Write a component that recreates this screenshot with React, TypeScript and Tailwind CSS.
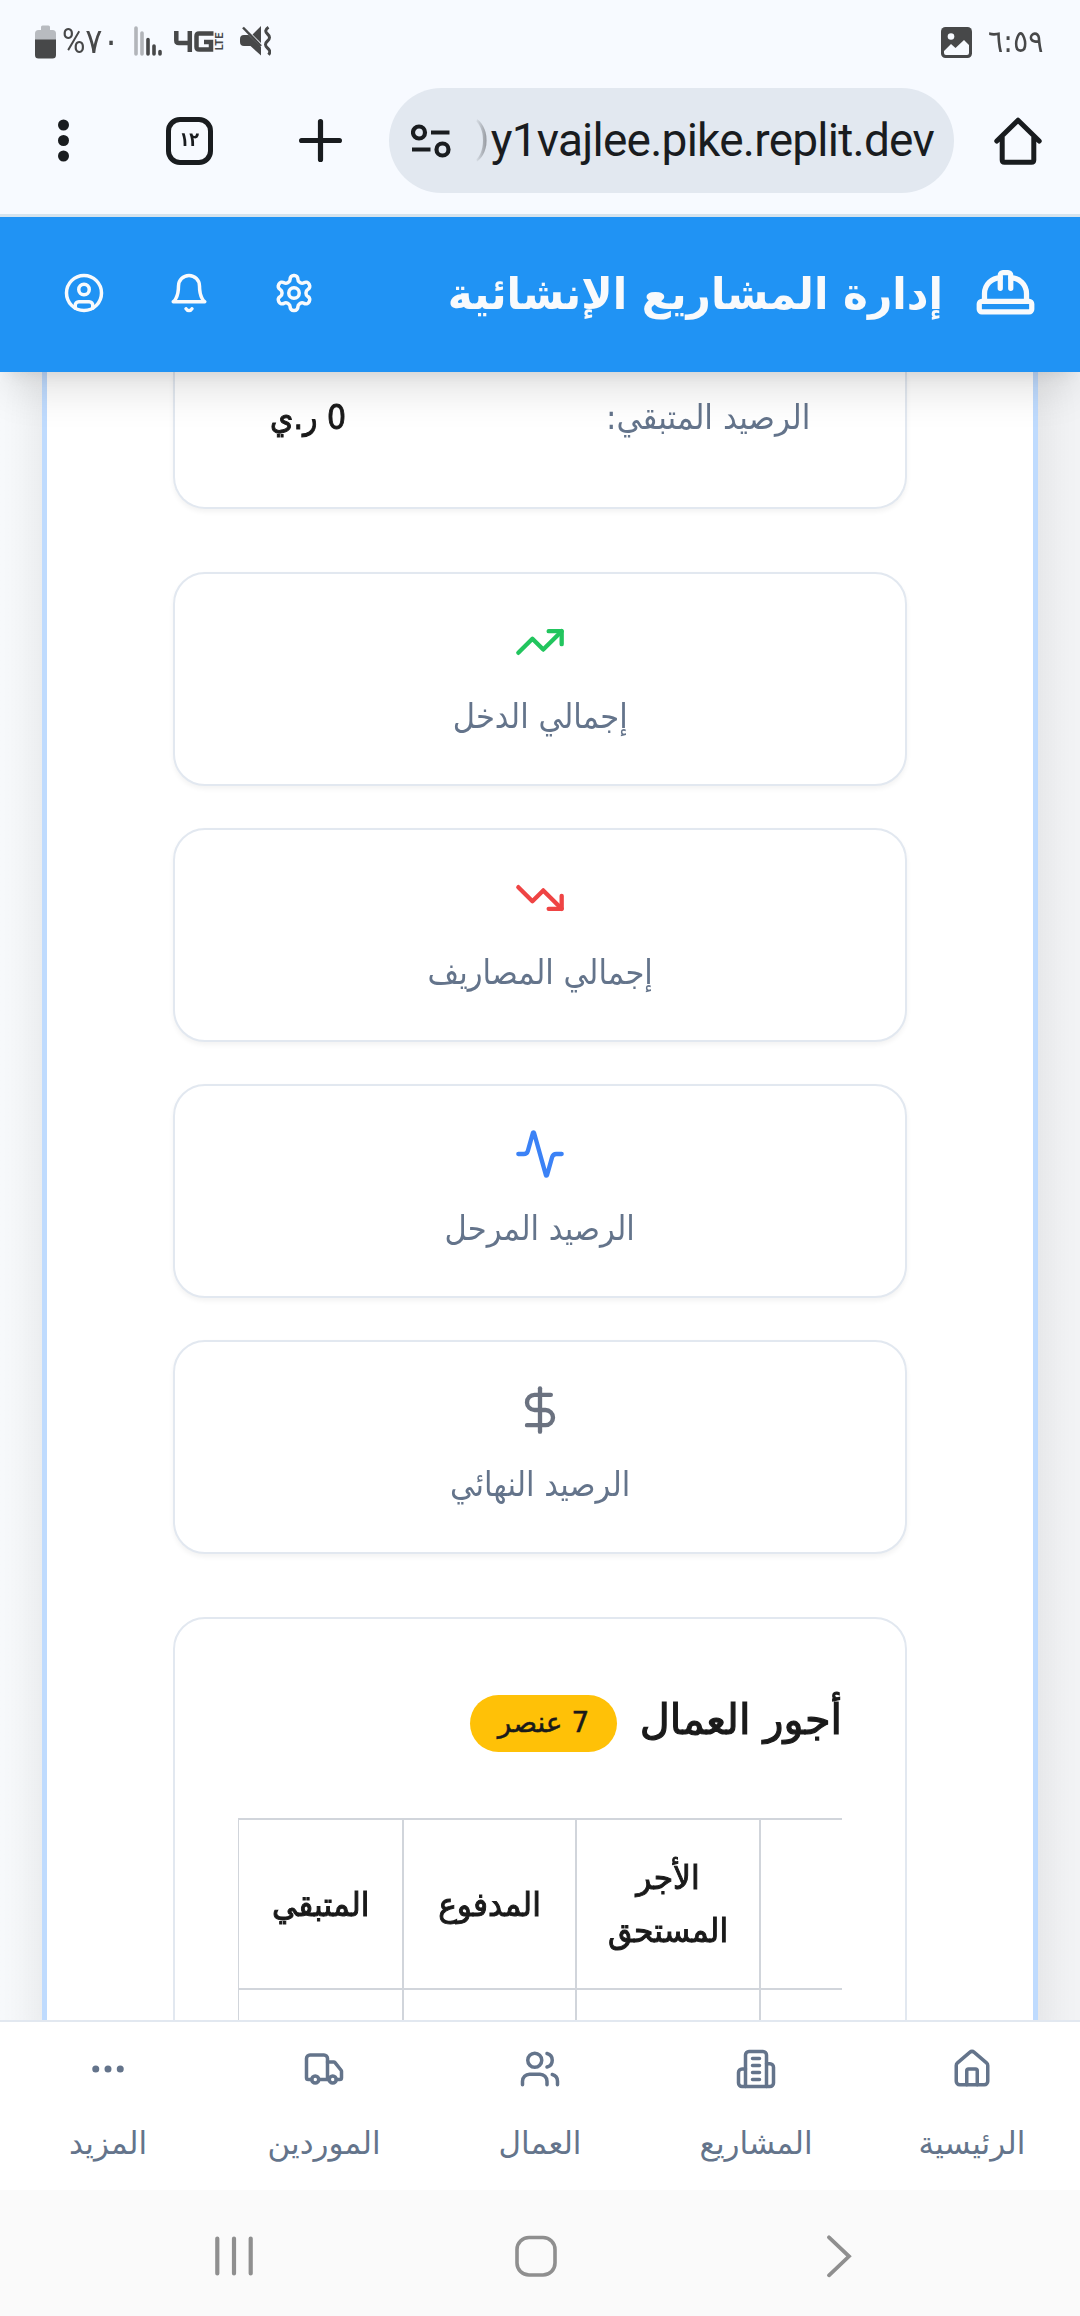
import React from 'react';
import { Activity, CircleUser, DollarSign, Ellipsis, HardHat, House, TrendingDown, TrendingUp, Truck, Users } from 'lucide-react';

type IconProps = { className?: string };

const lineIcon = {
  viewBox: '0 0 24 24',
  fill: 'none',
  stroke: 'currentColor',
  strokeWidth: 2,
  strokeLinecap: 'round' as const,
  strokeLinejoin: 'round' as const,
};

function GearIcon({ className }: IconProps) {
  return (
    <svg {...lineIcon} className={className}>
      <path d="M12.22 2h-.44a2 2 0 0 0-2 2v.18a2 2 0 0 1-1 1.73l-.43.25a2 2 0 0 1-2 0l-.15-.08a2 2 0 0 0-2.73.73l-.22.38a2 2 0 0 0 .73 2.73l.15.1a2 2 0 0 1 1 1.72v.51a2 2 0 0 1-1 1.74l-.15.09a2 2 0 0 0-.73 2.73l.22.38a2 2 0 0 0 2.73.73l.15-.08a2 2 0 0 1 2 0l.43.25a2 2 0 0 1 1 1.73V20a2 2 0 0 0 2 2h.44a2 2 0 0 0 2-2v-.18a2 2 0 0 1 1-1.73l.43-.25a2 2 0 0 1 2 0l.15.08a2 2 0 0 0 2.73-.73l.22-.39a2 2 0 0 0-.73-2.73l-.15-.08a2 2 0 0 1-1-1.74v-.5a2 2 0 0 1 1-1.74l.15-.09a2 2 0 0 0 .73-2.73l-.22-.38a2 2 0 0 0-2.73-.73l-.15.08a2 2 0 0 1-2 0l-.43-.25a2 2 0 0 1-1-1.73V4a2 2 0 0 0-2-2z" />
      <circle cx="12" cy="12" r="3" />
    </svg>
  );
}

function BellIcon({ className }: IconProps) {
  return (
    <svg {...lineIcon} className={className}>
      <path d="M6 8a6 6 0 0 1 12 0c0 7 3 9 3 9H3s3-2 3-9" />
      <path d="M10.3 21a1.94 1.94 0 0 0 3.4 0" />
    </svg>
  );
}

function BuildingIcon({ className }: IconProps) {
  return (
    <svg {...lineIcon} className={className}>
      <path d="M6 22V4a2 2 0 0 1 2-2h8a2 2 0 0 1 2 2v18Z" />
      <path d="M6 12H4a2 2 0 0 0-2 2v6a2 2 0 0 0 2 2h2" />
      <path d="M18 9h2a2 2 0 0 1 2 2v9a2 2 0 0 1-2 2h-2" />
      <path d="M10 6h4M10 10h4M10 14h4M10 18h4" />
    </svg>
  );
}

function StatusBar() {
  return (
    <div dir="ltr" className="flex h-[84px] items-center pl-[35px] pr-[36px] text-[#474849]">
      <svg className="h-[34px] w-[21px]" viewBox="0 0 21 34" fill="currentColor">
        <path d="M6 2a1.500 1.500 0 0 1 1.500-1.500h6A1.500 1.500 0 0 1 15 2v3h2.500A3.500 3.500 0 0 1 21 8.500V15H0V8.500A3.500 3.500 0 0 1 3.500 5H6z" fill="#b8bbc0" />
        <path d="M0 14.500h21V30a3.500 3.500 0 0 1-3.500 3.500h-14A3.500 3.500 0 0 1 0 30z" />
      </svg>
      <span className="ml-[6px] w-[57px] origin-left scale-x-[0.91] whitespace-nowrap font-[Roboto,'DejaVu_Sans',sans-serif] text-[35px] leading-[40px]">%٧٠</span>
      <svg className="-mt-[2px] ml-[15px] h-[30px] w-[28px]" viewBox="0 0 28 30" strokeWidth="3.600" strokeLinecap="round" stroke="currentColor">
        <path d="M2 2v26M8 7v21" stroke="#b2b5ba" />
        <path d="M14 13.500V28M20 20v8M26 25.500V28" />
      </svg>
      <svg className="-mt-[2px] ml-[12px] h-[21px] w-[40px]" viewBox="0 0 40 21" fill="none" stroke="currentColor" strokeWidth="4.500">
        <path d="M2.300 0v9.500q0 2.500 2.500 2.500H17M15.800 0v21" />
        <path d="M39.500 2.500H25q-2.500 0-2.500 2.500v11q0 2.500 2.500 2.500h12v-7.500h-7" />
      </svg>
      <span className="-mt-[2px] flex h-[22px] w-[11px] items-center justify-center">
        <span className="-rotate-90 font-[Roboto,sans-serif] text-[11px] font-bold leading-none">LTE</span>
      </span>
      <svg className="-mt-[2px] ml-[15px] h-[30px] w-[31px]" viewBox="0 0 31 30" fill="currentColor">
        <path d="M4 9h4.500L21 21v8.500L10.500 20H4a4 4 0 0 1-4-4v-3a4 4 0 0 1 4-4zM21 0v17l-8.500-8.500z" />
        <path d="M3 1.500l18 18.500" stroke="currentColor" strokeWidth="2.500" />
        <path d="M28.500 1.300q-5 3.400-1 6.700 4 3.500 0 7-4 3.500 0 7 4 3.300 1 6.700" fill="none" stroke="currentColor" strokeWidth="3" />
      </svg>
      <div className="ml-auto flex items-center">
        <svg className="h-[31px] w-[31px]" viewBox="0 0 31 31">
          <rect width="31" height="31" rx="4.500" fill="currentColor" />
          <circle cx="10" cy="9.500" r="3.300" fill="#f7faff" />
          <path d="M3 24l7-7 4.500 4L23 13l5 5v8a2 2 0 0 1-2 2H5a2 2 0 0 1-2-2z" fill="#f7faff" />
        </svg>
        <span className="-mt-[2px] ml-[16px] w-[56px] origin-left scale-x-[0.92] whitespace-nowrap font-['DejaVu_Sans',sans-serif] text-[31px] leading-[40px]">٦:٥٩</span>
      </div>
    </div>
  );
}

function BrowserBar() {
  return (
    <div dir="ltr" className="flex h-[130px] items-start pt-1 text-[#191c1f]">
      <svg className="ml-[58px] mt-[31px] h-[43px] w-[11px]" viewBox="0 0 11 43" fill="currentColor">
        <circle cx="5.500" cy="6" r="5.500" />
        <circle cx="5.500" cy="21.500" r="5.500" />
        <circle cx="5.500" cy="37" r="5.500" />
      </svg>
      <div className="ml-[97px] mt-[29px] flex h-[48px] w-[47px] items-center justify-center rounded-[14px] border-[5px] border-current">
        <span className="scale-x-[0.8] pb-1 font-['DejaVu_Sans',sans-serif] text-[20px] font-bold leading-none">١٢</span>
      </div>
      <svg className="ml-[86px] mt-[31px] h-[43px] w-[43px]" viewBox="0 0 43 43" stroke="currentColor" strokeWidth="5.200" strokeLinecap="round">
        <path d="M21.500 2.600v37.800M2.600 21.500h37.800" />
      </svg>
      <div className="ml-[47px] flex h-[105px] w-[565px] items-center rounded-full bg-[#e2e8f0]">
        <svg className="ml-[22px] h-[34px] w-[40px]" viewBox="0 0 40 34" fill="none" stroke="currentColor" strokeWidth="4.200">
          <circle cx="8" cy="8.500" r="6" />
          <circle cx="31.500" cy="25.500" r="6" />
          <path d="M20 8.500h18.500M1 25.500h18.500" />
        </svg>
        <div className="ml-[20px] flex w-[463px] items-center justify-end whitespace-nowrap font-[Roboto,sans-serif] text-[46px] leading-[60px] tracking-[-0.750px]">
          <span className="mb-1 mr-[2px] bg-linear-to-r from-transparent to-[#85898f] bg-clip-text text-[40px] text-transparent">)</span>
          <span className="-mt-[1px]">y1vajlee.pike.replit.dev</span>
        </div>
      </div>
      <svg className="ml-[40px] mt-[29px] h-[48px] w-[48px]" viewBox="0 0 48 48" fill="none" stroke="currentColor" strokeWidth="5" strokeLinecap="round" strokeLinejoin="round">
        <path d="M2.800 24L24 3.200 45.200 24M8.200 20v23q0 2.300 2.300 2.300h27q2.300 0 2.300-2.300V20" />
      </svg>
    </div>
  );
}

function AppHeader() {
  return (
    <header className="relative z-10 flex h-[155px] items-center bg-[#2093f4] px-[43px] pb-[3px] text-[#f8fafc] shadow-[0_26px_39px_-8px_rgba(0,0,0,0.12),0_10px_16px_-10px_rgba(0,0,0,0.1)]">
      <HardHat className="size-[63px]" />
      <h1 className="mr-[31px] w-[496px] origin-right scale-x-[0.96] whitespace-nowrap pt-[1px] font-['DejaVu_Sans',sans-serif] text-[44px] font-bold leading-[60px]">إدارة المشاريع الإنشائية</h1>
      <div className="mr-auto flex items-center gap-[63px] pl-[20px]">
        <GearIcon className="size-[42px]" />
        <BellIcon className="size-[42px]" />
        <CircleUser className="size-[42px]" />
      </div>
    </header>
  );
}

const stats = [
  { label: 'إجمالي الدخل', icon: TrendingUp, color: 'text-[#22c55e]' },
  { label: 'إجمالي المصاريف', icon: TrendingDown, color: 'text-[#ef4444]' },
  { label: 'الرصيد المرحل', icon: Activity, color: 'text-[#3b82f6]' },
  { label: 'الرصيد النهائي', icon: DollarSign, color: 'text-[#6b7280]' },
];

function StatCards() {
  return (
    <section className="mt-[63px] flex flex-col gap-[42px]">
      {stats.map(({ label, icon: Icon, color }) => (
        <div key={label} className="flex h-[214px] flex-col items-center rounded-[32px] border-2 border-[#e2e8f0] bg-white pt-[42px] shadow-[0_3px_5px_rgba(0,0,0,0.05)]">
          <Icon className={`size-[52px] ${color}`} />
          <p className="mt-[22px] scale-x-[0.9] whitespace-nowrap text-[34px] leading-[53px] text-[#64748b]">{label}</p>
        </div>
      ))}
    </section>
  );
}

function WagesCard() {
  return (
    <section className="mt-[63px] h-[500px] rounded-t-[32px] border-2 border-[#e2e8f0] bg-white px-[63px] pt-[63px]">
      <div className="flex h-[82px] items-center gap-[24px]">
        <h2 className="w-[201px] origin-right scale-x-[0.985] whitespace-nowrap pb-[6px] text-[42px] leading-[62px] text-[#1a1a1a] [-webkit-text-stroke:1.2px_#1a1a1a]">أجور العمال</h2>
        <span className="flex h-[57px] w-[147px] items-center justify-center whitespace-nowrap rounded-full bg-[#ffc107] text-[28px] text-[#1a1a1a] [-webkit-text-stroke:0.5px_#1a1a1a]">7 عنصر</span>
      </div>
      <div className="mt-[54px] w-[604px] overflow-hidden">
        <table className="w-[604px] table-fixed border-collapse text-[33px] leading-[53px] text-[#1a1a1a]">
          <colgroup>
            <col className="w-[82px]" />
            <col className="w-[184px]" />
            <col className="w-[173px]" />
            <col className="w-[165px]" />
          </colgroup>
          <tbody className="[&_span]:block [&_span]:scale-x-[0.95] [&_span]:whitespace-nowrap [&_span]:[-webkit-text-stroke:1px_#1a1a1a]">
            <tr className="h-[170px]">
              <th className="border-y-2 border-[#d1d5db]" />
              <th className="border-2 border-[#d1d5db] font-normal">
                <span>الأجر</span>
                <span>المستحق</span>
              </th>
              <th className="border-2 border-[#d1d5db] font-normal"><span>المدفوع</span></th>
              <th className="border-2 border-l border-[#d1d5db] font-normal"><span>المتبقي</span></th>
            </tr>
            <tr className="h-[120px]">
              <td className="border-y-2 border-[#d1d5db]" />
              <td className="border-2 border-[#d1d5db]" />
              <td className="border-2 border-[#d1d5db]" />
              <td className="border-2 border-l border-[#d1d5db]" />
            </tr>
          </tbody>
        </table>
      </div>
    </section>
  );
}

const tabs = [
  { label: 'الرئيسية', icon: House },
  { label: 'المشاريع', icon: BuildingIcon },
  { label: 'العمال', icon: Users },
  { label: 'الموردين', icon: Truck },
  { label: 'المزيد', icon: Ellipsis },
];

function BottomNav() {
  return (
    <nav className="relative z-10 grid h-[170px] grid-cols-5 border-t-2 border-[#e2e8f0] bg-white text-[#64748b]">
      {tabs.map(({ label, icon: Icon }) => (
        <div key={label} className="flex flex-col items-center pt-[26px]">
          <Icon className="size-[42px]" />
          <span className="mt-[28px] whitespace-nowrap font-['DejaVu_Sans',sans-serif] text-[31px] leading-[50px]">{label}</span>
        </div>
      ))}
    </nav>
  );
}

function SystemBar() {
  return (
    <div dir="ltr" className="flex h-[126px] items-start bg-[#fafafa] pt-[45px] text-[#8f8f8f]">
      <svg className="ml-[215px] h-[42px] w-[38px]" viewBox="0 0 38 42" stroke="currentColor" strokeWidth="4.200" strokeLinecap="round">
        <path d="M2.300 3.500v35M19 3.500v35M35.700 3.500v35" />
      </svg>
      <svg className="ml-[262px] h-[42px] w-[42px]" viewBox="0 0 42 42" fill="none" stroke="currentColor" strokeWidth="3.600">
        <rect x="2" y="2.500" width="38" height="37.500" rx="12" />
      </svg>
      <svg className="ml-[269px] h-[43px] w-[26px]" viewBox="0 0 26 43" fill="none" stroke="currentColor" strokeWidth="3.800" strokeLinecap="round">
        <path d="M3 2.300L23 21.300 3 40.300" />
      </svg>
    </div>
  );
}

export default function App() {
  return (
    <div dir="rtl" className="flex h-[2316px] w-[1080px] flex-col overflow-hidden bg-[#f7faff] font-['DejaVu_Sans',sans-serif]">
      <StatusBar />
      <BrowserBar />
      <div className="h-[3px] bg-[#d6e4ee]" />
      <AppHeader />
      <main className="h-[1648px] overflow-hidden bg-linear-to-r from-[#f8fafc] to-[#f3f4f6] px-[42px]">
        <div className="h-[1700px] border-x-[5px] border-[#bfdbfe] bg-white px-[126px] shadow-[0_0_50px_rgba(0,0,0,0.1)]">
          <section className="flex h-[137px] items-start justify-between rounded-b-[32px] border-2 border-t-0 border-[#e2e8f0] bg-white px-[95px] pt-[19px] text-[34px] leading-[53px] shadow-[0_3px_5px_rgba(0,0,0,0.05)]">
            <span className="origin-right scale-x-[0.915] whitespace-nowrap text-[#64748b]">الرصيد المتبقي:</span>
            <span className="origin-left scale-x-[0.88] whitespace-nowrap text-[#1a1a1a] [-webkit-text-stroke:1px_#1a1a1a]">0 ر.ي</span>
          </section>
          <StatCards />
          <WagesCard />
        </div>
      </main>
      <BottomNav />
      <SystemBar />
    </div>
  );
}
